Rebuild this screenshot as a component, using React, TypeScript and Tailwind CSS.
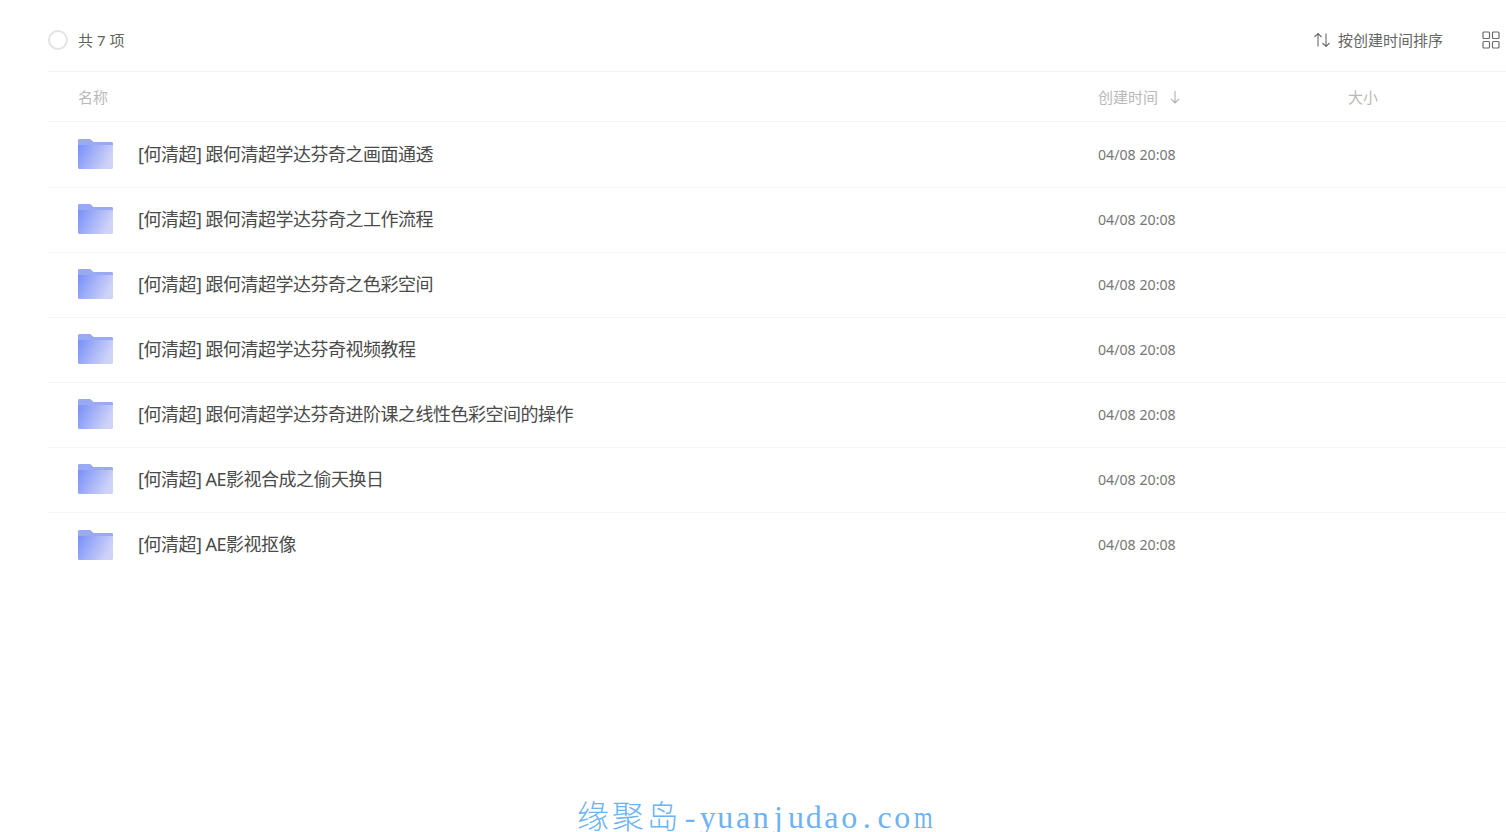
const FONT = 'font-["Noto_Sans","Noto_Sans_CJK_SC",sans-serif]'

const rows = [
  '[何清超] 跟何清超学达芬奇之画面通透',
  '[何清超] 跟何清超学达芬奇之工作流程',
  '[何清超] 跟何清超学达芬奇之色彩空间',
  '[何清超] 跟何清超学达芬奇视频教程',
  '[何清超] 跟何清超学达芬奇进阶课之线性色彩空间的操作',
  '[何清超] AE影视合成之偷天换日',
  '[何清超] AE影视抠像',
]

function FolderIcon({ id }: { id: string }) {
  return (
    <svg width="35" height="30" viewBox="0 0 35 30" className="shrink-0">
      <defs>
        <linearGradient id={id} x1="0" y1="0" x2="1" y2="0.35">
          <stop offset="0" stopColor="#7890f8" />
          <stop offset="1" stopColor="#cfd3f7" />
        </linearGradient>
      </defs>
      <path d="M0 1.500C0 .6.6 0 1.500 0h10c.8 0 1.300.3 1.900.9L15.500 3H33.500c.9 0 1.500.6 1.500 1.500V10H0Z" fill="#9aaaf2" />
      <path d="M0 6h35V28.500c0 .9-.6 1.500-1.500 1.500h-32C.6 30 0 29.400 0 28.500Z" fill={`url(#${id})`} />
    </svg>
  )
}

export default function App() {
  return (
    <div className={`relative h-[832px] w-[1506px] overflow-hidden bg-white ${FONT}`}>
      <div className="pl-12">
        {/* toolbar */}
        <div className="flex h-[72px] items-center border-b border-[#f2f2f4] pt-2">
          <div className="h-5 w-5 rounded-full border-2 border-[#e3e3e5]" />
          <span className="ml-2.5 pt-px text-[15px] text-[#636363]">共 7 项</span>
          <div className="ml-auto flex items-center text-[#666]">
            <svg width="18" height="16" viewBox="0 0 18 16" fill="none" stroke="#6b6b6b" strokeWidth="1.100">
              <path d="M5 14.500V1.500M1.500 5l3.500-3.500L8.500 5" />
              <path d="M13 1.500v13M9.500 11l3.500 3.500 3.500-3.500" />
            </svg>
            <span className="ml-[7px] pt-px text-[15px]">按创建时间排序</span>
            <svg width="18" height="18" viewBox="0 0 18 18" fill="none" stroke="#6b6b6b" strokeWidth="1.200" className="ml-[39px] mr-[6px]">
              <rect x="1" y="1" width="6.500" height="6.500" rx="1" />
              <rect x="10.500" y="1" width="6.500" height="6.500" rx="1" />
              <rect x="1" y="10.500" width="6.500" height="6.500" rx="1" />
              <rect x="10.500" y="10.500" width="6.500" height="6.500" rx="1" />
            </svg>
          </div>
        </div>

        {/* column header */}
        <div className="flex h-[50px] items-center border-b border-[#f4f4f6] pl-[30px] text-[15px] text-[#b9b9b9]">
          <span className="flex-1 pt-px">名称</span>
          <div className="flex w-[250px] items-center">
            <span className="pt-px">创建时间</span>
            <svg width="12" height="14" viewBox="0 0 12 14" fill="none" stroke="#b0b0b0" strokeWidth="1.100" className="ml-[11px]">
              <path d="M6 1v12M2 9l4 4 4-4" />
            </svg>
          </div>
          <span className="w-[158px] pt-px">大小</span>
        </div>

        {/* rows */}
        {rows.map((name, i) => (
          <div
            key={name}
            className={i === 0
              ? 'flex h-[66px] items-center border-b border-[#f5f5f7] pb-px pl-[30px]'
              : 'flex h-[65px] items-center border-b border-[#f5f5f7] pb-0.5 pl-[30px] last:border-b-0'}
          >
            <FolderIcon id={`folder-${i}`} />
            <span className="ml-[25px] flex-1 text-[18px] tracking-[-0.5px] text-[#4a4a4a]">{name}</span>
            <span className="w-[250px] pt-px text-[14.200px] text-[#777]">04/08 20:08</span>
            <span className="w-[158px]" />
          </div>
        ))}
      </div>

      {/* watermark */}
      <div className='absolute bottom-0 left-[577px] flex items-baseline whitespace-nowrap font-["Liberation_Serif","Noto_Sans_CJK_SC",serif] text-[32px] leading-[30px] text-[#6db3f2]'>
        <span className="text-[32px] font-light tracking-[2.700px]">缘聚岛</span>
        {'-yuanjudao.com'.split('').map((c, i) => (
          <span key={i} className="inline-block w-[17.700px] text-center">
            {c === 'm' ? <span className="inline-block scale-x-75">m</span> : c}
          </span>
        ))}
      </div>
    </div>
  )
}
